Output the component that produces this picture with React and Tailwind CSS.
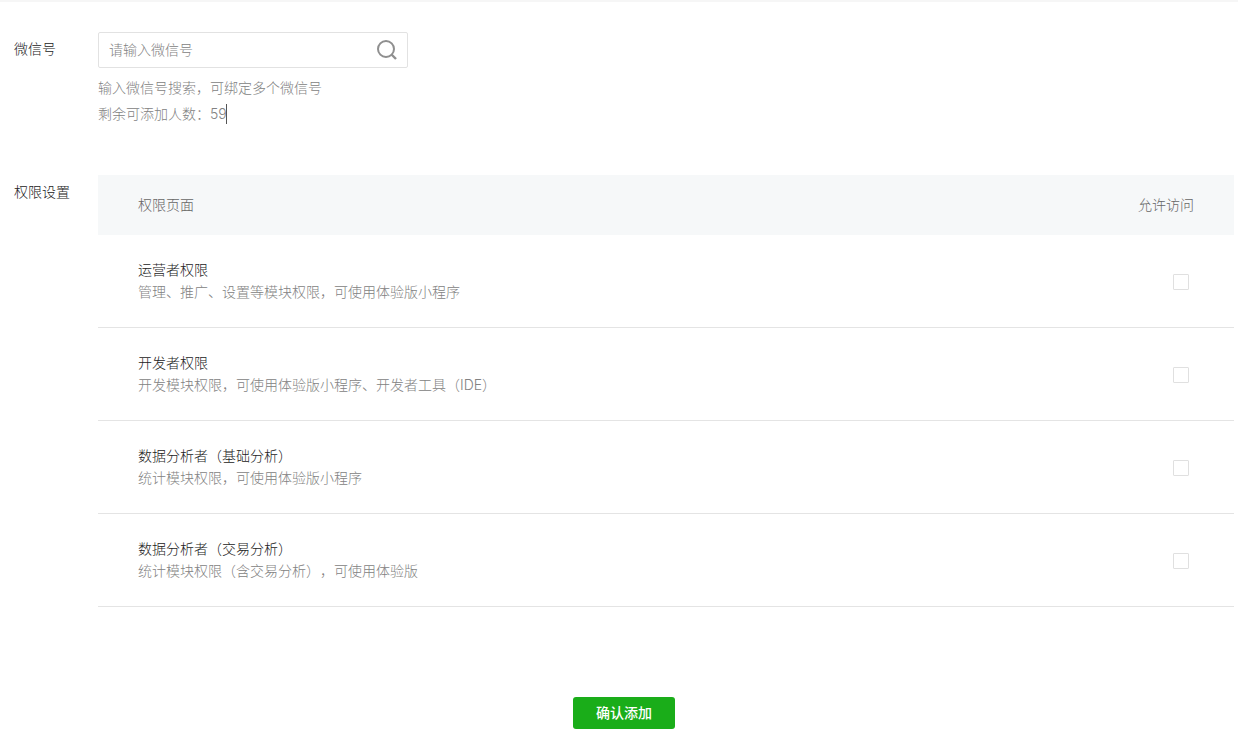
// components/AddMemberForm.jsx
import { useState } from 'react';

const PERMISSIONS = [
    {
        id: 'operator',
        title: '运营者权限',
        desc: '管理、推广、设置等模块权限，可使用体验版小程序',
    },
    {
        id: 'developer',
        title: '开发者权限',
        desc: '开发模块权限，可使用体验版小程序、开发者工具（IDE）',
    },
    {
        id: 'analyst-basic',
        title: '数据分析者（基础分析）',
        desc: '统计模块权限，可使用体验版小程序',
    },
    {
        id: 'analyst-trade',
        title: '数据分析者（交易分析）',
        desc: '统计模块权限（含交易分析），可使用体验版',
    },
];

function SearchIcon() {
    return (
        <svg width="22" height="22" viewBox="0 0 22 22" fill="none" stroke="#8f8f8f" strokeWidth="2" aria-hidden="true">
            <circle cx="10" cy="10" r="8" />
            <path d="M15.5 15.5L20 20" strokeWidth="2.4" />
        </svg>
    );
}

function PermissionRow({ item, checked, onToggle }) {
    return (
        <tr className="border-b border-[#e4e4e4]">
            <td className="py-6 pl-10">
                <label htmlFor={item.id} className="block text-[#222]">{item.title}</label>
                <p className="text-[#828282]">{item.desc}</p>
            </td>
            <td className="w-40 pt-0.5 pr-[45px]">
                <input
                    type="checkbox"
                    id={item.id}
                    checked={checked}
                    onChange={onToggle}
                    className="ml-auto block size-4 appearance-none rounded-[1px] border border-[#e0e0e0] bg-white checked:bg-[#1aad19]"
                />
            </td>
        </tr>
    );
}

export default function App() {
    const [wechatId, setWechatId] = useState('');
    const [selected, setSelected] = useState([]);

    const toggle = (id) => {
        setSelected((prev) => (prev.includes(id) ? prev.filter((x) => x !== id) : [...prev, id]));
    };

    const handleSubmit = (e) => {
        e.preventDefault();
    };

    return (
        <form
            onSubmit={handleSubmit}
            className="border-t-2 border-[#f6f6f6] bg-white pt-[30px] pr-1 pb-6 pl-3.5 font-['Inter','Noto_Sans_CJK_SC',sans-serif] text-sm leading-[22px] font-light [text-spacing-trim:space-all]"
        >
            <div className="flex">
                <label htmlFor="wechat" className="w-[84px] shrink-0 leading-[34px] text-[#222]">微信号</label>
                <div>
                    <div className="flex h-9 w-[310px] items-center rounded-xs border border-[#e2e2e2] pr-[9px] pl-2.5">
                        <input
                            type="text"
                            id="wechat"
                            value={wechatId}
                            onChange={(e) => setWechatId(e.target.value)}
                            placeholder="请输入微信号"
                            className="min-w-0 flex-1 text-[#222] outline-none placeholder:text-[#828282]"
                        />
                        <button type="button" aria-label="搜索">
                            <SearchIcon />
                        </button>
                    </div>
                    <div className="mt-[7px] leading-[26px] text-[#828282]">
                        <p>输入微信号搜索，可绑定多个微信号</p>
                        <p className="flex items-center">
                            剩余可添加人数：59
                            <span className="-ml-px h-5 w-px bg-[#555]" />
                        </p>
                    </div>
                </div>
            </div>

            <div className="mt-12 flex">
                <div className="w-[84px] shrink-0 leading-[34px] text-[#222]">权限设置</div>
                <table className="flex-1 border-collapse">
                    <thead>
                        <tr className="h-[60px] bg-[#f6f8f9] text-[#666]">
                            <th className="pl-10 text-left font-light">权限页面</th>
                            <th className="w-40 pr-10 text-right font-light">允许访问</th>
                        </tr>
                    </thead>
                    <tbody>
                        {PERMISSIONS.map((item) => (
                            <PermissionRow
                                key={item.id}
                                item={item}
                                checked={selected.includes(item.id)}
                                onToggle={() => toggle(item.id)}
                            />
                        ))}
                    </tbody>
                </table>
            </div>

            <div className="mt-[90px] flex justify-center">
                <button
                    type="submit"
                    className="h-8 w-[102px] rounded-[3px] bg-[#1aad19] font-medium text-white hover:bg-[#179b16]"
                >
                    确认添加
                </button>
            </div>
        </form>
    );
}
